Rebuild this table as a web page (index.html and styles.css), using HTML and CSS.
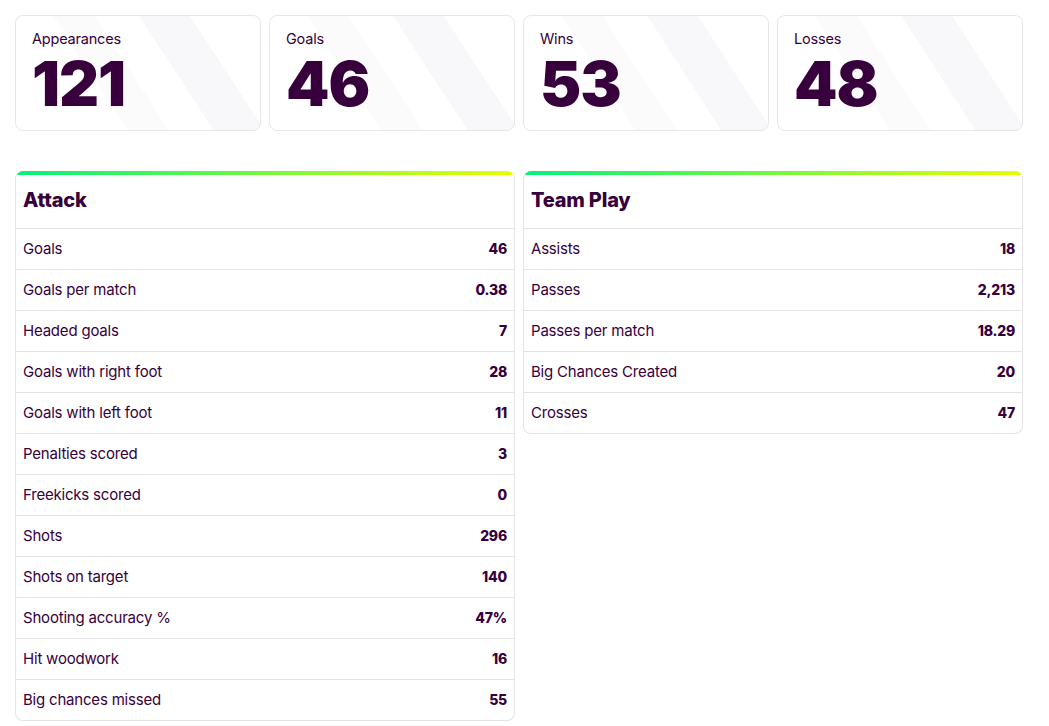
FILE: index.html
```html
<!DOCTYPE html>
<html lang="en">
<head>
<meta charset="utf-8">
<title>Player stats</title>
<link rel="stylesheet" href="styles.css">
</head>
<body>
<div class="page">
  <div class="top-stats">
    <div class="stat-card"><div class="stat-label">Appearances</div><div class="stat-value">121</div></div>
    <div class="stat-card"><div class="stat-label">Goals</div><div class="stat-value">46</div></div>
    <div class="stat-card"><div class="stat-label">Wins</div><div class="stat-value">53</div></div>
    <div class="stat-card"><div class="stat-label">Losses</div><div class="stat-value">48</div></div>
  </div>
  <div class="tables">
    <div class="table">
      <div class="table-head">Attack</div>
      <div class="row"><span>Goals</span><span class="val">46</span></div>
      <div class="row"><span>Goals per match</span><span class="val">0.38</span></div>
      <div class="row"><span>Headed goals</span><span class="val">7</span></div>
      <div class="row"><span>Goals with right foot</span><span class="val">28</span></div>
      <div class="row"><span>Goals with left foot</span><span class="val">11</span></div>
      <div class="row"><span>Penalties scored</span><span class="val">3</span></div>
      <div class="row"><span>Freekicks scored</span><span class="val">0</span></div>
      <div class="row"><span>Shots</span><span class="val">296</span></div>
      <div class="row"><span>Shots on target</span><span class="val">140</span></div>
      <div class="row"><span>Shooting accuracy %</span><span class="val">47%</span></div>
      <div class="row"><span>Hit woodwork</span><span class="val">16</span></div>
      <div class="row"><span>Big chances missed</span><span class="val">55</span></div>
    </div>
    <div class="table">
      <div class="table-head">Team Play</div>
      <div class="row"><span>Assists</span><span class="val">18</span></div>
      <div class="row"><span>Passes</span><span class="val">2,213</span></div>
      <div class="row"><span>Passes per match</span><span class="val">18.29</span></div>
      <div class="row"><span>Big Chances Created</span><span class="val">20</span></div>
      <div class="row"><span>Crosses</span><span class="val">47</span></div>
    </div>
  </div>
</div>
</body>
</html>
```

FILE: styles.css
```css
* { box-sizing: border-box; }
html, body { margin: 0; padding: 0; background: #fff; }
body {
  font-family: "Inter", "Lato", "Liberation Sans", sans-serif;
  color: #37003c;
}
.page {
  width: 1008px;
  margin: 15px 0 0 15px;
}
.top-stats {
  display: grid;
  grid-template-columns: repeat(4, 1fr);
  gap: 8px;
}
.stat-card {
  height: 116px;
  border: 1px solid #e9e6eb;
  border-radius: 8px;
  padding: 13px 16px 0;
  background:
    linear-gradient(57deg, transparent 0 62%, #f8f7fa 62% 78%, transparent 78%),
    linear-gradient(57deg, transparent 0 35%, #fbfbfc 35% 48%, transparent 48%),
    #fff;
}
.stat-label {
  font-size: 14.5px;
  line-height: 20px;
  letter-spacing: -0.2px;
}
.stat-value {
  font-size: 62px;
  font-weight: 900;
  line-height: 50px;
  letter-spacing: -1px;
  margin-top: 10px;
}
.tables {
  display: grid;
  grid-template-columns: 1fr 1fr;
  gap: 8px;
  align-items: start;
  margin-top: 40px;
}
.table {
  border: 1px solid #e6e3e8;
  border-top: none;
  border-radius: 8px;
  overflow: hidden;
}
.table-head {
  border-top: 4px solid transparent;
  border-image: linear-gradient(to right, #05f07c, #e6ff00) 1;
  border-image-width: 4px 0 0 0;
  height: 57px;
  padding: 0 7px 4px;
  font-size: 20px;
  font-weight: 800;
  letter-spacing: -0.2px;
  display: flex;
  align-items: center;
}
.row {
  display: flex;
  justify-content: space-between;
  align-items: center;
  height: 41px;
  border-top: 1px solid #e6e3e8;
  padding: 0 7px 2px;
  font-size: 15px;
  letter-spacing: -0.2px;
}
.val { font-weight: 800; font-size: 14px; }
```
